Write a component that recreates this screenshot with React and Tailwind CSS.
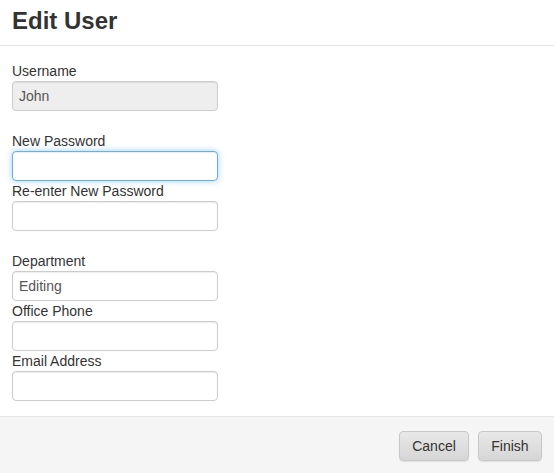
import React from 'react';

function Field({ label, value, disabled, focused }) {
  const tone = focused
    ? 'bg-white border-[#66afe9] shadow-[inset_0_1px_1px_rgba(0,0,0,0.075),0_0_6px_rgba(102,175,233,0.6)]'
    : disabled
    ? 'bg-[#eeeeee] border-[#cccccc] shadow-[inset_0_1px_1px_rgba(0,0,0,0.075)]'
    : 'bg-white border-[#cccccc] shadow-[inset_0_1px_1px_rgba(0,0,0,0.075)]';
  return (
    <div className="flex flex-col">
      <label className="h-5 leading-5 text-sm text-[#333]">{label}</label>
      <input
        type="text"
        readOnly
        value={value || ''}
        className={`h-[30px] w-[206px] rounded px-[6px] text-sm text-[#555] outline-none border ${tone}`}
      />
    </div>
  );
}

export default function App() {
  return (
    <div className="w-[554px] h-[473px] bg-white flex flex-col font-['Liberation_Sans',Arial,sans-serif] text-[#333]">
      {/* Header */}
      <div className="h-[46px] border-b border-[#e5e5e5] px-3 flex items-start">
        <h4 className="text-[24px] font-bold leading-[40px] pt-[1px]">Edit User</h4>
      </div>

      {/* Body */}
      <div className="flex-1 px-3 pt-[15px]">
        <Field label="Username" value="John" disabled />
        <div className="h-5" />
        <Field label="New Password" focused />
        <Field label="Re-enter New Password" />
        <div className="h-5" />
        <Field label="Department" value="Editing" />
        <Field label="Office Phone" />
        <Field label="Email Address" />
      </div>

      {/* Footer */}
      <div className="h-[57px] border-t border-[#e5e5e5] bg-[#f5f5f5] flex justify-end items-start gap-[9px] pt-[14px] pr-3">
        <button className="h-[30px] w-[70px] rounded border border-[#c8c8c8] bg-gradient-to-b from-[#e8e8e8] to-[#d6d6d6] text-sm text-[#333] shadow-[0_1px_1px_rgba(0,0,0,0.08)]">
          Cancel
        </button>
        <button className="h-[30px] w-[64px] rounded border border-[#c8c8c8] bg-gradient-to-b from-[#e8e8e8] to-[#d6d6d6] text-sm text-[#333] shadow-[0_1px_1px_rgba(0,0,0,0.08)]">
          Finish
        </button>
      </div>
    </div>
  );
}
